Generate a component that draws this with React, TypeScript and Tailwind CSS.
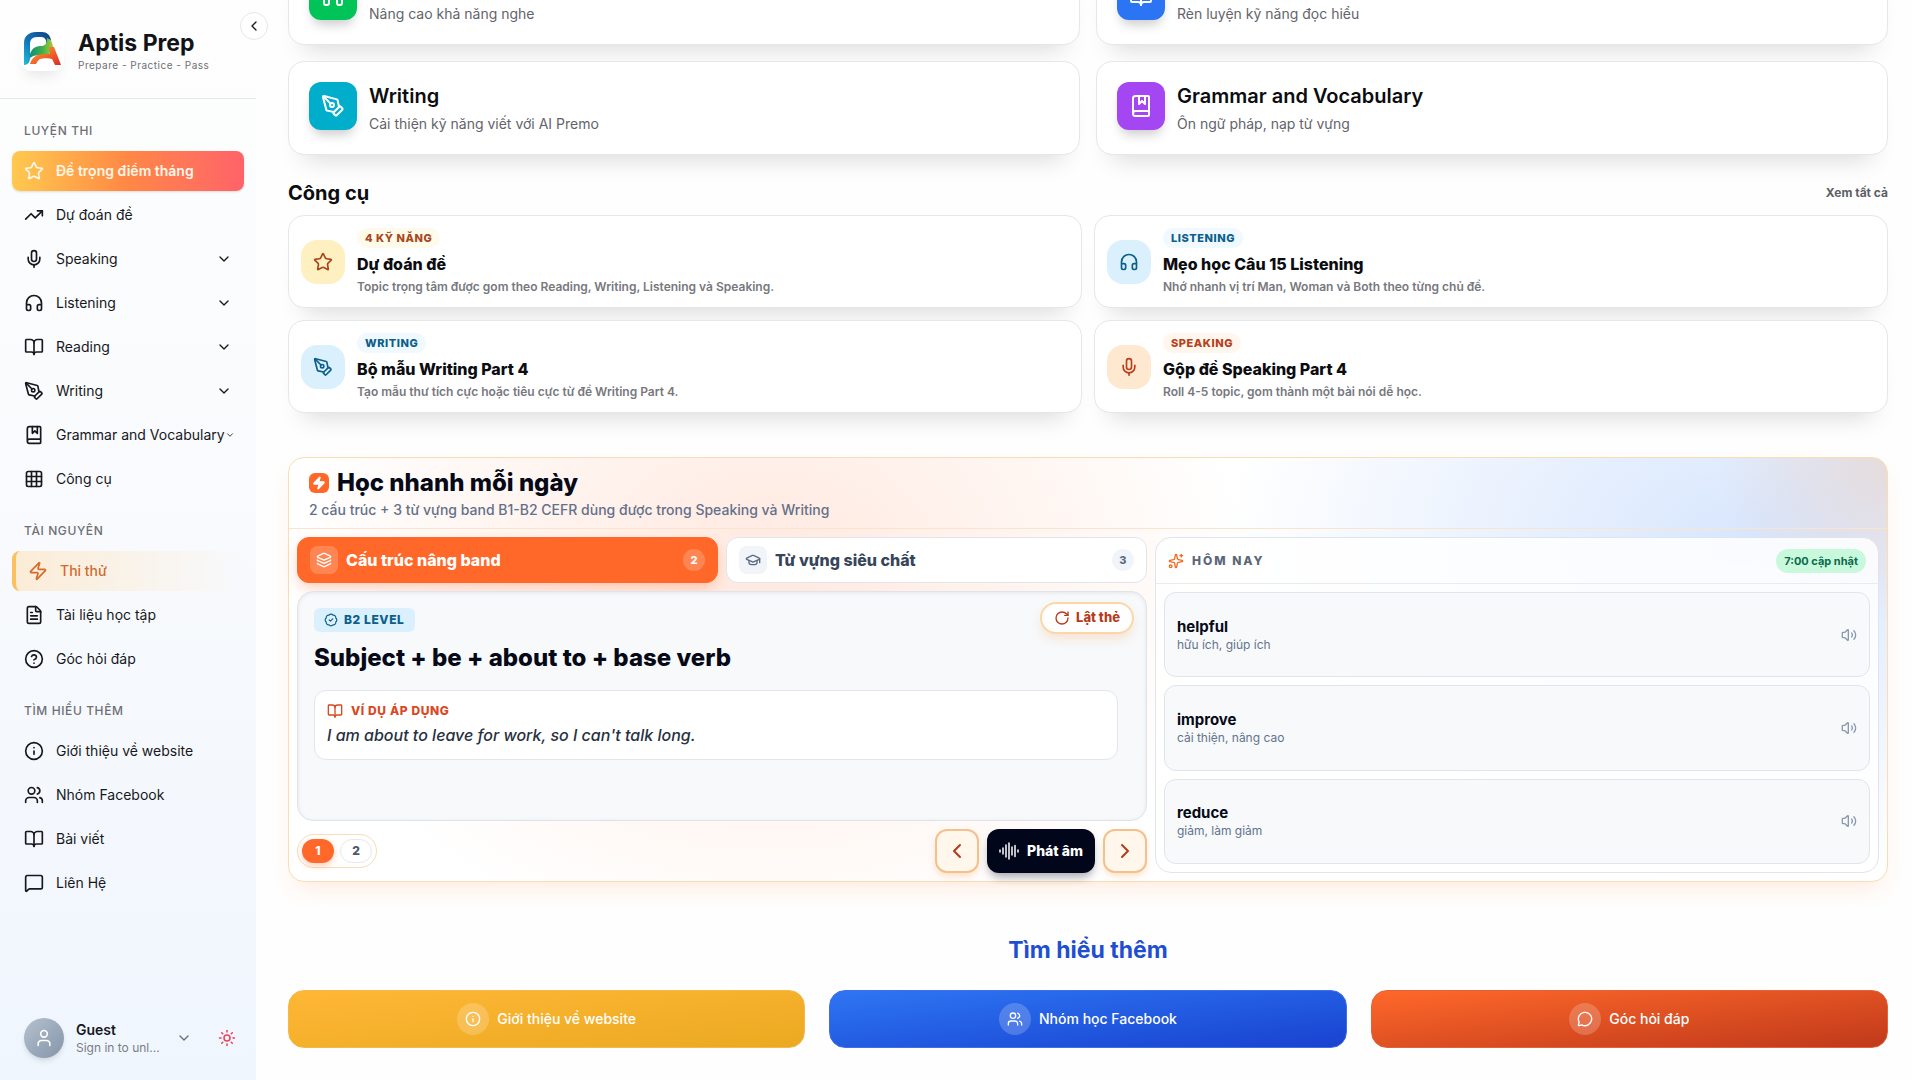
import type { ReactNode } from "react";
import {
  BadgeCheck,
  BookMarked,
  BookOpen,
  ChevronDown,
  ChevronLeft,
  ChevronRight,
  CircleHelp,
  FileText,
  GraduationCap,
  Grid3x3,
  Headphones,
  Info,
  Layers,
  MessageCircle,
  MessageSquare,
  Mic,
  PenTool,
  RotateCw,
  Sparkles,
  Star,
  Sun,
  TrendingUp,
  User,
  Users,
  Volume2,
  Zap,
  type LucideIcon,
} from "lucide-react";

type NavItem = { label: string; icon: LucideIcon; expandable?: boolean };

const practiceItems: NavItem[] = [
  { label: "Dự đoán đề", icon: TrendingUp },
  { label: "Speaking", icon: Mic, expandable: true },
  { label: "Listening", icon: Headphones, expandable: true },
  { label: "Reading", icon: BookOpen, expandable: true },
  { label: "Writing", icon: PenTool, expandable: true },
  { label: "Grammar and Vocabulary", icon: BookMarked, expandable: true },
  { label: "Công cụ", icon: Grid3x3 },
];

const resourceItems: NavItem[] = [
  { label: "Tài liệu học tập", icon: FileText },
  { label: "Góc hỏi đáp", icon: CircleHelp },
];

const aboutItems: NavItem[] = [
  { label: "Giới thiệu về website", icon: Info },
  { label: "Nhóm Facebook", icon: Users },
  { label: "Bài viết", icon: BookOpen },
  { label: "Liên Hệ", icon: MessageSquare },
];

const skills = [
  { title: "Listening", text: "Nâng cao khả năng nghe", icon: Headphones, color: "bg-[#00c457]" },
  { title: "Reading", text: "Rèn luyện kỹ năng đọc hiểu", icon: BookOpen, color: "bg-[#2b75f5]" },
  { title: "Writing", text: "Cải thiện kỹ năng viết với AI Premo", icon: PenTool, color: "bg-[#00aecb]" },
  { title: "Grammar and Vocabulary", text: "Ôn ngữ pháp, nạp từ vựng", icon: BookMarked, color: "bg-[#a446f2]" },
];

const tools = [
  {
    tag: "4 KỸ NĂNG",
    title: "Dự đoán đề",
    text: "Topic trọng tâm được gom theo Reading, Writing, Listening và Speaking.",
    icon: Star,
    tagColor: "bg-amber-50 text-[#a8481c]",
    iconColor: "bg-[#fef0c0] text-[#a8481c]",
  },
  {
    tag: "LISTENING",
    title: "Mẹo học Câu 15 Listening",
    text: "Nhớ nhanh vị trí Man, Woman và Both theo từng chủ đề.",
    icon: Headphones,
    tagColor: "bg-sky-50 text-[#0b5f8a]",
    iconColor: "bg-[#dbf0fd] text-[#0b5f8a]",
  },
  {
    tag: "WRITING",
    title: "Bộ mẫu Writing Part 4",
    text: "Tạo mẫu thư tích cực hoặc tiêu cực từ đề Writing Part 4.",
    icon: PenTool,
    tagColor: "bg-sky-50 text-[#0b5f8a]",
    iconColor: "bg-[#dbf0fd] text-[#0b5f8a]",
  },
  {
    tag: "SPEAKING",
    title: "Gộp đề Speaking Part 4",
    text: "Roll 4-5 topic, gom thành một bài nói dễ học.",
    icon: Mic,
    tagColor: "bg-orange-50 text-[#b8401c]",
    iconColor: "bg-[#fee8d0] text-[#b8401c]",
  },
];

const words = [
  { word: "helpful", meaning: "hữu ích, giúp ích" },
  { word: "improve", meaning: "cải thiện, nâng cao" },
  { word: "reduce", meaning: "giảm, làm giảm" },
];

const learnMore = [
  { label: "Giới thiệu về website", icon: Info, color: "from-[#ffb735] to-[#eba921] border-[#f3b94a]" },
  { label: "Nhóm học Facebook", icon: Users, color: "from-[#2f75f3] to-[#1a41d0] border-[#3f6fe8]" },
  { label: "Góc hỏi đáp", icon: MessageCircle, color: "from-[#ff682a] to-[#c0391b] border-[#e2633a]" },
];

function Logo() {
  return (
    <svg viewBox="0 0 40 40" className="size-10" aria-hidden="true">
      <defs>
        <linearGradient id="logo-p" x1="0" y1="1" x2="1" y2="0">
          <stop offset="0" stopColor="#1cc0dc" />
          <stop offset="0.45" stopColor="#1273b4" />
          <stop offset="1" stopColor="#0f3f86" />
        </linearGradient>
        <linearGradient id="logo-g" x1="0" y1="0" x2="1" y2="0">
          <stop offset="0" stopColor="#0f8f7a" />
          <stop offset="0.5" stopColor="#3fae49" />
          <stop offset="1" stopColor="#b5cf38" />
        </linearGradient>
        <linearGradient id="logo-a" x1="0" y1="0" x2="1" y2="1">
          <stop offset="0" stopColor="#f7a62c" />
          <stop offset="0.5" stopColor="#f2672a" />
          <stop offset="1" stopColor="#d92d27" />
        </linearGradient>
      </defs>
      <path d="M2 36V14C2 7 7 3 14 3h6c5 0 8 3 9 8l-5 5c1-5-1-8-5-8h-4c-5 0-7 3-7 7v14c0 4-2 7-6 7z" fill="url(#logo-p)" />
      <path d="M8 25c2-6 6-8 11-8 4 0 6-2 6-8l4 2 3 9c-2 5-6 6-11 6-6 0-9 0-13 3z" fill="url(#logo-g)" />
      <path d="M27 18l5 0 7 18h-6l-3-6c-3-1-9-1-12 0-2 1-3 3-4 5H8c2-7 7-10 14-10h6z" fill="url(#logo-a)" />
    </svg>
  );
}

function Waveform() {
  return (
    <svg viewBox="0 0 20 20" className="size-5" fill="none" stroke="currentColor" strokeWidth="1.5" strokeLinecap="round" aria-hidden="true">
      <path d="M1 9v2M4 7v6M7 4v12M10 2v16M13 6v8M16 4.5v11M19 9v2" />
    </svg>
  );
}

function NavLabel({ children }: { children: ReactNode }) {
  return <h2 className="mb-3 px-3 text-xs leading-4 font-medium tracking-wider text-[#6f6f74]">{children}</h2>;
}

function NavLink({ item }: { item: NavItem }) {
  const Icon = item.icon;
  if (item.expandable) {
    return (
      <button type="button" className="flex h-10 w-full items-center gap-3 rounded-lg px-3 text-left text-sm text-[#17181c]">
        <Icon className="size-5 shrink-0" />
        <span className="flex min-w-0 flex-1 items-center justify-between">
          <span className="whitespace-nowrap">{item.label}</span>
          <ChevronDown className="size-4 min-w-2.5 shrink" />
        </span>
      </button>
    );
  }
  return (
    <a href="#" className="flex h-10 items-center gap-3 rounded-lg px-3 text-sm text-[#17181c]">
      <Icon className="size-5 shrink-0" />
      {item.label}
    </a>
  );
}

function Sidebar() {
  return (
    <aside className="relative flex w-64 shrink-0 flex-col bg-linear-to-b from-[#fefefe] via-[#f8fafd] to-[#f0f6fe]">
      <button
        type="button"
        aria-label="Thu gọn"
        className="absolute top-3 -right-3 z-10 flex size-7 items-center justify-center rounded-full border border-gray-200 bg-white text-[#17181c]">
        <ChevronLeft className="size-4" />
      </button>

      <div className="flex h-[99px] items-center gap-3.5 border-b border-[#e4eaee] px-5">
        <div className="flex size-11 shrink-0 items-center justify-center rounded-xl bg-white shadow-[0_10px_14px_-6px_rgba(0,0,0,0.1)]">
          <Logo />
        </div>
        <div className="min-w-0 pt-1">
          <div className="text-[23px] leading-7 font-bold whitespace-nowrap text-[#121317]">Aptis Prep</div>
          <div className="text-[10px] leading-4 tracking-wider whitespace-nowrap text-[#6f6f74]">Prepare - Practice - Pass</div>
        </div>
      </div>

      <nav className="flex flex-1 flex-col gap-6 px-3 pt-6">
        <div>
          <NavLabel>LUYỆN THI</NavLabel>
          <div className="flex flex-col gap-1">
            <a
              href="#"
              className="flex h-10 items-center gap-3 rounded-lg bg-linear-to-r from-[#ffc94f] via-[#ff8745] to-[#ff6268] px-3 text-sm font-semibold text-[#fff7e8] shadow-sm">
              <Star className="size-5 shrink-0" />
              Đề trọng điểm tháng
            </a>
            {practiceItems.map((item) => (
              <NavLink key={item.label} item={item} />
            ))}
          </div>
        </div>
        <div>
          <NavLabel>TÀI NGUYÊN</NavLabel>
          <div className="flex flex-col gap-1">
            <a
              href="#"
              className="flex h-10 items-center gap-3 rounded-lg border-l-4 border-[#f9c15f] bg-linear-to-r from-[#fbecd6] to-transparent px-3 text-sm font-medium text-[#d46a2b]">
              <Zap className="size-5 shrink-0" />
              Thi thử
            </a>
            {resourceItems.map((item) => (
              <NavLink key={item.label} item={item} />
            ))}
          </div>
        </div>
        <div>
          <NavLabel>TÌM HIỂU THÊM</NavLabel>
          <div className="flex flex-col gap-1">
            {aboutItems.map((item) => (
              <NavLink key={item.label} item={item} />
            ))}
          </div>
        </div>
      </nav>

      <div className="flex items-center justify-between pr-3 pb-[22px] pl-5">
        <button type="button" className="flex items-center gap-3 pl-1 text-left">
          <span className="flex size-10 items-center justify-center rounded-full bg-linear-to-br from-[#b4c1cf] to-[#8595a8] text-white shadow-md">
            <User className="size-5" />
          </span>
          <span className="flex w-[84px] flex-col whitespace-nowrap">
            <span className="text-sm leading-5 font-semibold text-[#17181c]">Guest</span>
            <span className="text-xs leading-4 text-[#7b7d84]">Sign in to unl...</span>
          </span>
          <ChevronDown className="ml-1 size-4 text-[#6b6e76]" />
        </button>
        <button type="button" aria-label="Giao diện" className="p-2 text-[#e8425a]">
          <Sun className="size-[18px]" />
        </button>
      </div>
    </aside>
  );
}

function SkillGrid() {
  return (
    <div className="grid grid-cols-2 gap-4">
      {skills.map(({ title, text, icon: Icon, color }) => (
        <a
          key={title}
          href="#"
          className="flex items-start gap-3 rounded-2xl border border-[#e6e7e9] bg-white p-5 shadow-[0_20px_25px_-16px_rgba(0,0,0,0.15)]">
          <span className={`flex size-12 shrink-0 items-center justify-center rounded-xl text-white shadow-[0_8px_12px_-4px_rgba(0,0,0,0.22)] ${color}`}>
            <Icon className="size-6" />
          </span>
          <span className="flex flex-col gap-1">
            <span className="text-xl leading-7 font-semibold text-[#0c0d10]">{title}</span>
            <span className="text-sm leading-5 text-[#63646a]">{text}</span>
          </span>
        </a>
      ))}
    </div>
  );
}

function ToolGrid() {
  return (
    <section className="mt-6">
      <div className="mb-2 flex items-center justify-between">
        <h2 className="text-xl leading-7 font-bold text-[#0c0d10]">Công cụ</h2>
        <a href="#" className="text-xs leading-4 font-bold text-[#5d5e64]">
          Xem tất cả
        </a>
      </div>
      <div className="grid grid-cols-2 gap-3">
        {tools.map(({ tag, title, text, icon: Icon, tagColor, iconColor }) => (
          <a
            key={title}
            href="#"
            className="flex items-center gap-3 rounded-2xl border border-[#e6e7e9] bg-white p-3 shadow-[0_20px_25px_-16px_rgba(0,0,0,0.15)]">
            <span className={`flex size-11 shrink-0 items-center justify-center rounded-2xl ${iconColor}`}>
              <Icon className="size-5" />
            </span>
            <span className="flex flex-col items-start">
              <span className={`mb-1 rounded-full px-2 text-[11px] leading-5 font-extrabold tracking-wider ${tagColor}`}>{tag}</span>
              <span className="text-base leading-6 font-extrabold text-[#0c0d10]">{title}</span>
              <span className="mt-[3px] text-xs leading-4 font-semibold text-[#77787e]">{text}</span>
            </span>
          </a>
        ))}
      </div>
    </section>
  );
}

function FlashCard() {
  return (
    <div className="relative mt-2 flex-1 rounded-2xl border border-[#dfe4ec] bg-[#f7f9fb] py-4 pr-7 pl-4 shadow-[inset_0_1px_4px_rgba(15,23,42,0.08)]">
      <button
        type="button"
        className="absolute top-2.5 right-3 flex h-8 items-center gap-1.5 rounded-full border-2 border-[#fbd7a8] bg-white px-3 text-[13px] font-extrabold text-[#b63a1c] shadow-[0_6px_12px_-2px_rgba(251,146,60,0.25)]">
        <RotateCw className="size-4" />
        Lật thẻ
      </button>
      <span className="inline-flex h-6 items-center gap-1.5 rounded-md bg-[#dbf0fd] px-2.5 align-top text-xs font-extrabold tracking-wider text-[#0b5f8a]">
        <BadgeCheck className="size-3.5" />
        B2 LEVEL
      </span>
      <h3 className="mt-2.5 text-2xl leading-8 font-extrabold text-[#060a18]">Subject + be + about to + base verb</h3>
      <div className="mt-4 rounded-xl border border-[#e2e6ec] bg-white p-3">
        <div className="flex items-center gap-2 text-xs leading-4 font-extrabold tracking-wider text-[#d9481f]">
          <BookOpen className="size-4" />
          VÍ DỤ ÁP DỤNG
        </div>
        <p className="mt-1 text-base leading-6 font-medium text-[#27313f] italic">I am about to leave for work, so I can't talk long.</p>
      </div>
    </div>
  );
}

function DailyLesson() {
  return (
    <section className="mt-11 rounded-2xl border border-[#fbdcb4] bg-white bg-[radial-gradient(ellipse_480px_380px_at_30%_28%,rgba(255,104,40,0.15),transparent),radial-gradient(ellipse_520px_340px_at_91%_20%,rgba(59,130,246,0.2),transparent),radial-gradient(circle_at_100%_0%,rgba(255,190,140,0.35),transparent_170px)] shadow-[0_12px_24px_-8px_rgba(251,146,60,0.2)]">
      <header className="border-b border-[#fbe3cc] px-5 py-[9px]">
        <h2 className="flex items-center gap-2 text-2xl leading-8 font-extrabold text-[#060a18]">
          <span className="flex size-5 items-center justify-center rounded-md bg-[#ff6829] text-white">
            <Zap className="size-3.5 fill-current" />
          </span>
          Học nhanh mỗi ngày
        </h2>
        <p className="mt-0.5 text-sm leading-[18px] font-medium text-[#64708a]">
          2 cấu trúc + 3 từ vựng band B1-B2 CEFR dùng được trong Speaking và Writing
        </p>
      </header>

      <div className="grid grid-cols-[54fr_46fr] gap-2 p-2">
        <div className="flex min-w-0 flex-col">
          <div className="grid grid-cols-2 gap-2">
            <button
              type="button"
              className="flex h-[46px] items-center gap-2 rounded-xl border border-[#ff6829] bg-[#ff6829] px-3 text-base font-extrabold text-white shadow-[0_6px_14px_-2px_rgba(255,104,41,0.35)]">
              <span className="flex size-7 items-center justify-center rounded-lg bg-white/20">
                <Layers className="size-4" />
              </span>
              Cấu trúc nâng band
              <span className="ml-auto flex size-[22px] items-center justify-center rounded-full bg-white/20 text-[11px]">2</span>
            </button>
            <button
              type="button"
              className="flex h-[46px] items-center gap-2 rounded-xl border border-[#e2e6ec] bg-white px-3 text-base font-extrabold text-[#37455a]">
              <span className="flex size-7 items-center justify-center rounded-lg bg-[#f1f4f8] text-[#5b6b84]">
                <GraduationCap className="size-4" />
              </span>
              Từ vựng siêu chất
              <span className="ml-auto flex size-[22px] items-center justify-center rounded-full bg-[#f1f4f8] text-[11px] text-[#5b6b84]">3</span>
            </button>
          </div>

          <FlashCard />

          <div className="mt-2 flex items-center justify-between">
            <div className="flex items-center gap-1.5 rounded-full border border-[#fbdcb4] bg-white p-1 text-xs font-extrabold">
              <button type="button" className="h-6 w-8 rounded-full bg-[#ff6829] text-white shadow-[0_3px_6px_rgba(255,104,41,0.3)]">
                1
              </button>
              <button type="button" className="h-6 w-8 rounded-full border border-[#e6e9ee] bg-white text-[#4a586c]">
                2
              </button>
            </div>
            <div className="flex items-center gap-2">
              <button
                type="button"
                aria-label="Thẻ trước"
                className="flex size-11 items-center justify-center rounded-xl border-2 border-[#f3c18c] bg-[#fff7ec] text-[#b63a1c] shadow-[0_4px_8px_-2px_rgba(251,146,60,0.35)]">
                <ChevronLeft className="size-6" />
              </button>
              <button
                type="button"
                className="flex h-11 items-center gap-2 rounded-xl bg-[#02061a] px-3 text-sm font-extrabold text-white shadow-[0_6px_10px_-2px_rgba(2,6,26,0.35)]">
                <Waveform />
                Phát âm
              </button>
              <button
                type="button"
                aria-label="Thẻ sau"
                className="flex size-11 items-center justify-center rounded-xl border-2 border-[#f3c18c] bg-[#fff7ec] text-[#b63a1c] shadow-[0_4px_8px_-2px_rgba(251,146,60,0.35)]">
                <ChevronRight className="size-6" />
              </button>
            </div>
          </div>
        </div>

        <div className="flex min-h-[336px] min-w-0 flex-col rounded-2xl border border-[#dfe5ee] bg-white/85">
          <div className="flex h-[46px] items-center justify-between border-b border-[#e8ecf2] px-3">
            <h3 className="flex items-center gap-2 text-xs font-extrabold tracking-[2px] text-[#5b6779]">
              <Sparkles className="size-4 text-[#f4691f]" />
              HÔM NAY
            </h3>
            <span className="rounded-full bg-[#c8f9dd] px-2 text-[11px] leading-6 font-bold text-[#0a6b4b]">7:00 cập nhật</span>
          </div>
          <ul className="grid flex-1 grid-rows-3 gap-2 p-2">
            {words.map(({ word, meaning }) => (
              <li key={word} className="flex items-center justify-between rounded-xl border border-[#e0e5ec] bg-[#f7f9fb] px-3">
                <div>
                  <div className="text-[15px] leading-5 font-bold text-[#060a18]">{word}</div>
                  <div className="text-xs leading-4 text-[#64748b]">{meaning}</div>
                </div>
                <button type="button" aria-label={`Nghe ${word}`} className="text-[#8a99ad]">
                  <Volume2 className="size-4" />
                </button>
              </li>
            ))}
          </ul>
        </div>
      </div>
    </section>
  );
}

function LearnMore() {
  return (
    <section className="mt-12">
      <h2 className="text-center text-[23px] leading-10 font-bold text-[#1d4fd0]">Tìm hiểu thêm</h2>
      <div className="mt-5 grid grid-cols-3 gap-6">
        {learnMore.map(({ label, icon: Icon, color }) => (
          <a
            key={label}
            href="#"
            className={`flex items-center justify-center gap-2 rounded-2xl border bg-linear-to-br py-3 text-sm font-medium text-white ${color}`}>
            <span className="flex size-8 items-center justify-center rounded-full bg-white/20">
              <Icon className="size-4" />
            </span>
            {label}
          </a>
        ))}
      </div>
    </section>
  );
}

export default function App() {
  return (
    <div className="flex h-screen overflow-hidden bg-[#fefefe] font-['Inter','Noto_Sans',sans-serif]">
      <Sidebar />
      <main className="min-w-0 flex-1 pr-6 pl-8">
        {/* The list is scrolled, so the first row is cut by the top edge */}
        <div className="-mt-[49px]">
          <SkillGrid />
          <ToolGrid />
          <DailyLesson />
          <LearnMore />
        </div>
      </main>
    </div>
  );
}
